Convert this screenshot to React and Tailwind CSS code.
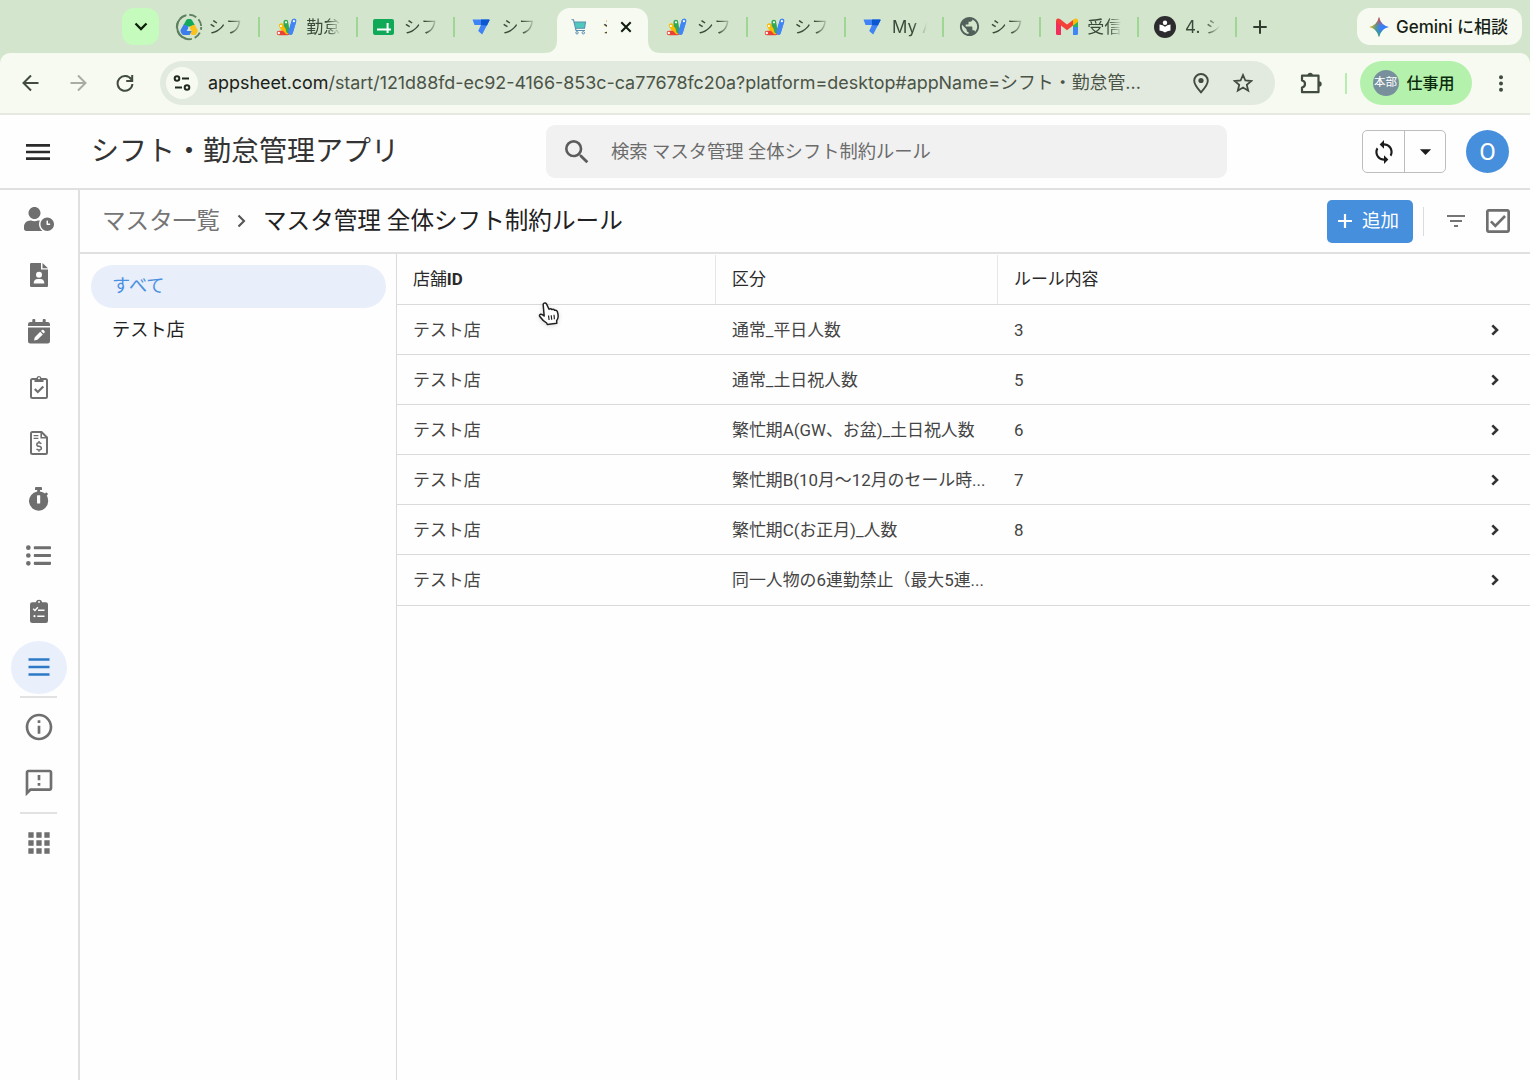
import React from "react";
import {
  MdSync, MdArrowDropDown, MdFilterList, MdOutlineCheckBox, MdSearch, MdMenu,
  MdOutlineInfo, MdOutlineFeedback, MdApps, MdPublic,
} from "react-icons/md";
import { FaUserClock, FaListUl, FaChevronRight } from "react-icons/fa";

/* ---------- browser tab icons ---------- */

const DriveLoading = () => (
  <svg width="28" height="28" viewBox="0 0 28 28" fill="none">
    <path d="M10.5 25.5A12.2 12.2 0 0 1 10.5 2.3" stroke="#5f8060" strokeWidth="1.9" />
    <circle cx="14" cy="14" r="12.2" stroke="#5f8060" strokeWidth="1.9" strokeDasharray="7.4 3" strokeDashoffset="15" pathLength="76.6" />
    <path d="M10.5 7.5q.9-1.5 2.6-1.5h2q1.700 1.500l3 5.200-4 2.400-4-6z" fill="none" />
    <path d="M11 7.4Q11.800 6 13.400 6h1.400q1.600 0 2.400 1.400l2.600 4.600-5.700 1.700-5.600-1.700z" fill="#12a95b" />
    <path d="M8.700 11.600l4.200 1.700 1.200 4.200-2.700 4.500H9q-1.500 0-2.300-1.300l-.9-1.600q-.7-1.200 0-2.500z" fill="#3b7ded" />
    <path d="M19.500 11.600l2.900 5q.7 1.300 0 2.500l-.9 1.600Q20.700 22 19.200 22h-2.600l-2.700-4.500 1.400-4.200z" fill="#fcc21b" />
    <path d="M14.100 13.700l2.500 4.200h-5z" fill="#d3e6cd" />
    <path d="M11.600 17.900h5L14.600 22h-5.200z" fill="#3b7ded" />
  </svg>
);

const AppsScript = () => (
  <svg width="21" height="18" viewBox="0 0 21 18" fill="none" strokeLinecap="round">
    <path d="M9 14L5.300 7.600" stroke="#fbbc04" strokeWidth="4.600" />
    <path d="M10.500 13L9.800 4.200" stroke="#34a853" strokeWidth="4.800" />
    <path d="M14.500 14.500L18 3" stroke="#4285f4" strokeWidth="4.600" />
    <path d="M3 15h8.500" stroke="#ea4335" strokeWidth="4.600" />
    <path d="M5 8l6 6.500" stroke="#fbbc04" strokeWidth="3.500" />
    <path d="M10 4l2 9.500" stroke="#34a853" strokeWidth="3.500" />
    <path d="M14.500 14.500L18 3" stroke="#4285f4" strokeWidth="4.600" />
    <g fill="#fff"><circle cx="2.800" cy="15" r="1.200" /><circle cx="4.900" cy="8" r="1.100" /><circle cx="10" cy="4.300" r="1.100" /><circle cx="17.900" cy="3.200" r="1.100" /></g>
  </svg>
);

const SheetPlus = () => (
  <svg width="21" height="16" viewBox="0 0 21 16">
    <rect width="21" height="16" rx="2" fill="#0fa958" />
    <path d="M4 10.500h14M14.600 4v10" stroke="#fff" strokeWidth="2" />
  </svg>
);

const AppSheet = () => (
  <svg width="18" height="16" viewBox="0 0 18 16">
    <path d="M.5.500h16.500q.8 0 .5.800L10.200 15.500 6.200 12l2.700-6H2.500z" fill="#3f83f6" />
    <path d="M9 .500h8q.8 0 .5.800L15 6.500 9 6z" fill="#0b57d0" />
  </svg>
);

const Cart = () => (
  <svg width="16" height="16" viewBox="0 0 16 16" fill="none">
    <path d="M3.300 3h11.200l-1 6.300H4.800z" fill="#4fc9be" />
    <path d="M.5.800h2l2.500 10.700h9M3.300 3h11.200l-1 6.300H4.800" stroke="#5b8fae" strokeWidth="1.100" />
    <circle cx="6" cy="13.800" r="1.200" stroke="#5b8fae" /><circle cx="12.300" cy="13.800" r="1.200" stroke="#5b8fae" />
  </svg>
);

const Gmail = () => (
  <svg width="22" height="17" viewBox="0 0 22 17">
    <path d="M0 2.500L5 6v11H1.500Q0 17 0 15.500z" fill="#f0305a" />
    <path d="M17 6l5-3.500v13q0 1.500-1.500 1.500H17z" fill="#3f87f5" />
    <path d="M17 6l5-3.500V9h-5z" fill="#2ab45b" />
    <path d="M17 7.500V2l1-.9Q19.500 0 21 .8q1 .7 1 2.200l-.2 1z" fill="#fbbc04" />
    <path d="M0 3Q0 1.500 1 .8 2.500 0 4 1.100l7 5.300 6-4.500v5.700l-6 4.600L5 7.600 0 4z" fill="#f3413a" />
  </svg>
);

const Reader = () => (
  <svg width="22" height="22" viewBox="0 0 22 22">
    <circle cx="11" cy="11" r="11" fill="#2c2c2f" />
    <circle cx="11" cy="6.800" r="2.200" fill="#fff" />
    <path d="M5.500 8.500Q9 8.800 11 10.700q2-1.900 5.500-2.200v6q-3.500.3-5.500 2-2-1.700-5.500-2z" fill="#fff" />
  </svg>
);

const Globe = () => <MdPublic size={23} className="text-[#53605a]" />;

const tabs = [
  { icon: DriveLoading, text: "シフト" },
  { icon: AppsScript, text: "勤怠管" },
  { icon: SheetPlus, text: "シフト" },
  { icon: AppSheet, text: "シフト", noRule: true },
  { active: true },
  { icon: AppsScript, text: "シフト" },
  { icon: AppsScript, text: "シフト" },
  { icon: AppSheet, text: "My App" },
  { icon: Globe, text: "シフト" },
  { icon: Gmail, text: "受信ト" },
  { icon: Reader, text: "4. シフ" },
];

function Tab({ icon: Icon, text, noRule }) {
  return (
    <div className="flex h-full w-[97.650px] shrink-0 items-center">
      <div className="ml-[12px] flex w-[28px] shrink-0 justify-center"><Icon /></div>
      <div className="ml-[6px] w-[35px] overflow-hidden whitespace-nowrap text-[17px] leading-[26px] tracking-[0.2px] text-[#3c4a3a] [mask-image:linear-gradient(to_right,#000_60%,transparent_100%)]">{text}</div>
      <div className={noRule ? "hidden" : "ml-auto h-[20px] w-[2px] bg-[#a0d694]"} />
    </div>
  );
}

function ActiveTab() {
  return (
    <div className="flex h-full w-[97.650px] shrink-0 items-end">
      <svg width="13" height="13" viewBox="0 0 13 13" className="-ml-[9px] shrink-0"><path d="M13 0v13H0Q13 13 13 0z" fill="#f7faf1" /></svg>
      <div className="flex h-[45px] w-[91px] shrink-0 items-center rounded-t-[13px] bg-[#f7faf1] pb-[8px]">
        <div className="ml-[14px]"><Cart /></div>
        <div className="ml-[15px] w-[5px] overflow-hidden whitespace-nowrap text-[17px] leading-[26px] text-[#3c4a3a]">シ</div>
        <svg width="12" height="12" viewBox="0 0 12 12" className="ml-[13px]"><path d="M1.300 1.300l9.400 9.400M10.700 1.300l-9.400 9.400" stroke="#111a10" strokeWidth="2" /></svg>
      </div>
      <svg width="13" height="13" viewBox="0 0 13 13" className="shrink-0"><path d="M0 0v13h13Q0 13 0 0z" fill="#f7faf1" /></svg>
    </div>
  );
}

function TabStrip() {
  return (
    <div className="flex h-[53px] items-center bg-[#d3e6cd]">
      <div className="ml-[122px] flex size-[37px] shrink-0 items-center justify-center rounded-[12px] bg-[#c5fcbd]">
        <svg width="14" height="9" viewBox="0 0 14 9" fill="none"><path d="M1.500 1.500L7 7l5.500-5.500" stroke="#0c1f0a" strokeWidth="2.300" /></svg>
      </div>
      <div className="ml-[3.500px] flex h-full items-center">
        {tabs.map((t, i) => (t.active ? <ActiveTab key={i} /> : <Tab key={i} {...t} />))}
      </div>
      <svg width="14" height="14" viewBox="0 0 14 14" className="ml-[16px]"><path d="M7 .3v13.400M.3 7h13.400" stroke="#303c2e" strokeWidth="2" /></svg>
      <div className="ml-auto mr-[8px] flex h-[37px] w-[165px] shrink-0 items-center rounded-[13px] bg-[#f7faf1] pl-[12px]">
        <svg width="20" height="20" viewBox="0 0 20 20">
          <defs>
            <linearGradient id="gem" x1="0" y1="0.400" x2="1" y2="0.600">
              <stop offset="0.050" stopColor="#e8b923" /><stop offset="0.350" stopColor="#5b9a8a" /><stop offset="0.550" stopColor="#3b80f5" /><stop offset="1" stopColor="#2f7bf6" />
            </linearGradient>
            <linearGradient id="gemTop" x1="0" y1="0" x2="0" y2="1">
              <stop offset="0" stopColor="#ea4335" /><stop offset="0.450" stopColor="#ea4335" stopOpacity="0" /><stop offset="0.600" stopColor="#34a853" stopOpacity="0" /><stop offset="1" stopColor="#34a853" />
            </linearGradient>
          </defs>
          <path d="M10 0Q11.800 8.200 20 10 11.800 11.800 10 20 8.200 11.800 0 10 8.200 8.200 10 0z" fill="url(#gem)" />
          <path d="M10 0Q11.800 8.200 20 10 11.800 11.800 10 20 8.200 11.800 0 10 8.200 8.200 10 0z" fill="url(#gemTop)" />
        </svg>
        <span className="ml-[7px] whitespace-nowrap text-[17px] font-medium leading-[26px] text-[#161d15]">Gemini に相談</span>
      </div>
    </div>
  );
}

function Toolbar() {
  return (
    <div className="bg-[#d3e6cd]">
      <div className="flex h-[62px] items-center rounded-t-[10px] border-b-2 border-[#e6e9df] bg-[#f7faf1]">
        <svg width="18" height="18" viewBox="0 0 18 18" fill="none" className="ml-[22px]"><path d="M16.500 9H2M9 1.500L1.500 9 9 16.500" stroke="#414b3f" strokeWidth="2" /></svg>
        <svg width="18" height="18" viewBox="0 0 18 18" fill="none" className="ml-[29px]"><path d="M1.500 9H16M9 1.500L16.500 9 9 16.500" stroke="#a8aca3" strokeWidth="2" /></svg>
        <svg width="18" height="18" viewBox="0 0 18 18" fill="none" className="ml-[29px]"><path d="M15.300 5.500A7.400 7.400 0 1 0 16.400 10M16.200 1v6h-6" stroke="#414b3f" strokeWidth="2" /></svg>
        <div className="ml-[26px] flex h-[44px] w-[1115px] shrink-0 items-center rounded-full bg-[#e2e9de]">
          <div className="ml-[6px] flex size-[32px] shrink-0 items-center justify-center rounded-full bg-[#f7faf1]">
            <svg width="18" height="16" viewBox="0 0 18 16" fill="none" stroke="#20291f" strokeWidth="2">
              <circle cx="4" cy="3.500" r="2.300" /><path d="M9 3.500h7M2 12.500h7" /><circle cx="14" cy="12.500" r="2.300" />
            </svg>
          </div>
          <div className="ml-[10px] w-[960px] whitespace-nowrap text-[17.900px] leading-[28px] text-[#4a5447]">
            <span className="text-[#1a2119]">appsheet.com</span>/start/121d88fd-ec92-4166-853c-ca77678fc20a?platform=desktop#appName=シフト・勤怠管...
          </div>
          <svg width="16" height="21" viewBox="0 0 16 21" fill="none" className="ml-[25px]"><path d="M8 19.300Q1.200 12 1.200 7.800a6.800 6.800 0 0 1 13.600 0Q14.800 12 8 19.300z" stroke="#414b3f" strokeWidth="1.900" /><circle cx="8" cy="7.500" r="2.600" fill="#414b3f" /></svg>
          <svg width="20" height="20" viewBox="0 0 20 20" fill="none" className="ml-[24px]"><path d="M10 2l2.400 5.500 6 .5-4.600 3.900 1.400 5.800L10 14.600l-5.200 3.100 1.400-5.800L1.600 8l6-.5z" stroke="#414b3f" strokeWidth="1.800" /></svg>
        </div>
        <svg width="22" height="22" viewBox="0 0 22 22" fill="none" className="ml-[25px]">
          <path d="M2 3.700h16.500v16.500H2v-4.700q3-.6 3-3.500T2 8.500z" stroke="#414b3f" strokeWidth="2.200" strokeLinejoin="round" />
          <path d="M7.500 3.500a2.700 2.700 0 0 1 5.400 0zM19 9.300a2.700 2.700 0 0 1 0 5.400z" fill="#414b3f" />
        </svg>
        <div className="ml-[22.500px] h-[21px] w-[2px] bg-[#b5eeae]" />
        <div className="ml-[13px] flex h-[44px] w-[112px] shrink-0 items-center rounded-full bg-[#b4f1ad]">
          <div className="ml-[13px] flex size-[26px] shrink-0 items-center justify-center whitespace-nowrap rounded-full bg-[#78909c] text-[11.500px] text-white">本部</div>
          <span className="ml-[8px] whitespace-nowrap text-[16px] font-medium leading-[24px] text-[#0a2a0b]">仕事用</span>
        </div>
        <svg width="4" height="17" viewBox="0 0 4 17" fill="#414b3f" className="ml-[27px]"><circle cx="2" cy="2.200" r="2" /><circle cx="2" cy="8.500" r="2" /><circle cx="2" cy="14.800" r="2" /></svg>
      </div>
    </div>
  );
}

/* ---------- app side navigation icons ---------- */

const FileUser = () => (
  <svg width="18" height="24" viewBox="0 0 18 24">
    <path d="M0 1.200Q0 0 1.200 0H11v6.500h7v16.300q0 1.200-1.200 1.200H1.200Q0 24 0 22.800z M12.500 0L18 5.300h-5.500z" fill="#6f6f6f" />
    <circle cx="9" cy="11.800" r="3" fill="#fff" /><path d="M3.700 20.500q0-4.500 4-4.500h2.600q4 0 4 4.500z" fill="#fff" />
  </svg>
);
const CalendarPen = () => (
  <svg width="22" height="25" viewBox="0 0 22 25">
    <path d="M0 7V5.300Q0 3 2.300 3h2V1Q4.300 0 5.300 0h1Q7.300 0 7.300 1v2h7.400V1q0-1 1-1h1q1 0 1 1v2h2Q22 3 22 5.300V7zM0 8.600h22v13.600Q22 24.500 19.700 24.500H2.300Q0 24.500 0 22.200z" fill="#6f6f6f" />
    <path d="M6 21.600l.8-3.400 5.400-5.400 2.600 2.600-5.400 5.400zM13 12l1-1q.7-.6 1.400 0l1.200 1.200q.6.700 0 1.400l-1 1z" fill="#fff" />
  </svg>
);
const ClipboardCheck = () => (
  <svg width="18" height="24" viewBox="0 0 18 24" fill="none">
    <rect x="1" y="4" width="16" height="19" rx="1.500" stroke="#6f6f6f" strokeWidth="2" />
    <path d="M4.500 7V3.500h2a2.500 2.500 0 0 1 5 0h2V7z" fill="#6f6f6f" /><circle cx="9" cy="3.200" r="1" fill="#fff" />
    <path d="M4.800 14l3 3 5.500-5.500" stroke="#6f6f6f" strokeWidth="2.200" />
  </svg>
);
const FileDollar = () => (
  <svg width="18" height="24" viewBox="0 0 18 24" fill="none" stroke="#6f6f6f">
    <path d="M2.500 1h9L17 6.500v15q0 1.500-1.500 1.500h-13Q1 23 1 21.500v-19Q1 1 2.500 1z" strokeWidth="2" />
    <path d="M11.200 1.500v5.300h5.300" strokeWidth="1.600" />
    <path d="M3.600 4.600h4.800M3.600 7.400h4.800" strokeWidth="1.300" />
    <path d="M11.300 12.700q-.8-1-2.300-1-2.200 0-2.200 1.700T9 15.300q2.400.3 2.400 2T9 19q-1.700 0-2.500-1.100M9 10v1.800M9 19v1.700" strokeWidth="1.500" />
  </svg>
);
const Stopwatch = () => (
  <svg width="20" height="24" viewBox="0 0 20 24">
    <path d="M6 1q0-1 1-1h5q1 0 1 1v2h-2v1.500q3 .4 5 2l1.200-1.300 1.900 1.900-1.300 1.400Q19.200 11 19.200 14.300a9.600 9.600 0 1 1-11-9.700V3H6z" fill="#6f6f6f" />
    <rect x="8" y="8.200" width="3.200" height="8.300" rx=".6" fill="#fff" />
  </svg>
);
const ClipboardList = () => (
  <svg width="18" height="24" viewBox="0 0 18 24">
    <path d="M2.200 3.200h3.600a3.300 3.300 0 0 1 6.400 0h3.600Q18 3.200 18 5.400v16.400Q18 24 15.800 24H2.200Q0 24 0 21.800V5.400q0-2.200 2.200-2.200z" fill="#6f6f6f" />
    <g fill="none" stroke="#fff"><circle cx="9" cy="3" r=".9" fill="#fff" stroke="none" /><path d="M3.200 9.800l1.700 1.700 3-3.200" strokeWidth="1.400" /><path d="M8 11.300h6.500M7.300 17.200h7.200" strokeWidth="1.600" /></g>
    <circle cx="4.500" cy="17.200" r="1.100" fill="#fff" />
  </svg>
);
const Bars = () => (
  <svg width="22" height="18" viewBox="0 0 22 18"><path d="M.5 1.500h21M.5 9h21M.5 16.500h21" stroke="#2e78c8" strokeWidth="2.600" /></svg>
);

const navIcons = [
  <FaUserClock size={30} />, <FileUser />, <CalendarPen />, <ClipboardCheck />,
  <FileDollar />, <Stopwatch />, <FaListUl size={25} />, <ClipboardList />,
];

function SideNav() {
  return (
    <nav className="flex w-[80px] shrink-0 flex-col items-center border-r-2 border-[#e0e0e0] pr-[1px] pt-[1px] text-[#6f6f6f]">
      {navIcons.map((icon, i) => <div key={i} className="flex h-[56px] w-[56px] items-center justify-center">{icon}</div>)}
      <div className="flex h-[56px] w-[56px] items-center justify-center">
        <div className="flex h-[53px] w-[56px] items-center justify-center rounded-[50%] bg-[#e9f0fb]"><Bars /></div>
      </div>
      <div className="mt-[1px] h-[2px] w-[37px] bg-[#e2e2e2]" />
      <div className="mt-[1px] flex h-[56px] items-center"><MdOutlineInfo size={32} /></div>
      <div className="flex h-[56px] items-center"><MdOutlineFeedback size={32} /></div>
      <div className="mt-[1px] h-[2px] w-[37px] bg-[#e2e2e2]" />
      <div className="mt-[1px] flex h-[56px] items-center"><MdApps size={32} /></div>
    </nav>
  );
}

const rows = [
  ["通常_平日人数", "3"],
  ["通常_土日祝人数", "5"],
  ["繁忙期A(GW、お盆)_土日祝人数", "6"],
  ["繁忙期B(10月〜12月のセール時...", "7"],
  ["繁忙期C(お正月)_人数", "8"],
  ["同一人物の6連勤禁止（最大5連...", ""],
];

function AppHeader() {
  return (
    <header className="flex h-[75px] shrink-0 items-center border-b-2 border-[#e0e0e0]">
      <MdMenu size={32} className="ml-[22px] shrink-0 text-[#2b2b2b]" />
      <h1 className="ml-[37px] w-[455px] shrink-0 whitespace-nowrap text-[28px] leading-[36px] text-[#333]">シフト・勤怠管理アプリ</h1>
      <div className="flex h-[53px] w-[681px] shrink-0 items-center rounded-[9px] bg-[#f1f1f1]">
        <MdSearch size={32} className="ml-[15px] text-[#5c5c5c]" />
        <span className="ml-[18px] whitespace-nowrap text-[18.300px] leading-[26px] text-[#6b6b6b]">検索 マスタ管理 全体シフト制約ルール</span>
      </div>
      <div className="ml-[135px] flex h-[43px] w-[84px] shrink-0 rounded-[5px] border border-[#bdbdbd]">
        <div className="flex w-[42px] items-center justify-center border-r border-[#bdbdbd]"><MdSync size={26} className="text-[#1c1c1c]" /></div>
        <div className="flex flex-1 items-center justify-center"><MdArrowDropDown size={27} className="text-[#1c1c1c]" /></div>
      </div>
      <div className="ml-[20px] flex size-[43px] shrink-0 items-center justify-center rounded-full bg-[#468fdd] text-[24px] text-white">O</div>
    </header>
  );
}

function ViewBar() {
  return (
    <div className="flex h-[64px] shrink-0 items-center border-b-2 border-[#e0e0e0] text-[23.600px] leading-[32px]">
      <span className="ml-[22px] whitespace-nowrap text-[#757575]">マスタ一覧</span>
      <svg width="9" height="14" viewBox="0 0 9 14" fill="none" className="ml-[17px]"><path d="M1.500 1.500L7 7l-5.500 5.500" stroke="#555" strokeWidth="2.100" /></svg>
      <span className="ml-[17px] whitespace-nowrap text-[#212121]">マスタ管理 全体シフト制約ルール</span>
      <div className="ml-auto flex h-[43px] w-[86px] items-center rounded-[5px] bg-[#468fdd] text-white">
        <svg width="14" height="14" viewBox="0 0 14 14" className="ml-[11px]"><path d="M7 0v14M0 7h14" stroke="#fff" strokeWidth="2.200" /></svg>
        <span className="ml-[10px] text-[18.500px] leading-[26px]">追加</span>
      </div>
      <div className="ml-[10px] h-[29px] w-px bg-[#dcdcdc]" />
      <MdFilterList size={24} className="ml-[20px] text-[#757575]" />
      <MdOutlineCheckBox size={32} className="ml-[14px] mr-[16px] text-[#6f6f6f]" />
    </div>
  );
}

function RuleTable() {
  return (
    <div className="relative min-w-0 flex-1 text-[16.900px] leading-[24px]">
      <div className="flex h-[51px] border-b border-[#dadada] pt-[1px] text-[#2a2a2a]">
        <div className="flex w-[319px] items-center border-r border-[#e6e6e6] pl-[16px] pb-[1px]">店舗<b>ID</b></div>
        <div className="flex w-[282px] items-center border-r border-[#e6e6e6] pl-[16px] pb-[1px]">区分</div>
        <div className="flex items-center pl-[16px] pb-[1px]">ルール内容</div>
      </div>
      {rows.map(([kind, value]) => (
        <div key={kind} className="flex h-[50.100px] items-center border-b border-[#dadada] text-[#444]">
          <div className="w-[319px] shrink-0 pl-[16px]">テスト店</div>
          <div className="w-[282px] shrink-0 whitespace-nowrap pl-[16px]">{kind}</div>
          <div className="flex-1 pl-[16px]">{value}</div>
          <svg width="8" height="12" viewBox="0 0 8 12" fill="none" className="mr-[31px]"><path d="M1.300 1.300L6 6l-4.700 4.700" stroke="#333" strokeWidth="2.600" /></svg>
        </div>
      ))}
      {/* mouse pointer */}
      <svg width="22" height="26" viewBox="0 0 22 26" className="absolute left-[141px] top-[47px] drop-shadow-sm">
        <path d="M5.500 2.500Q7.500 1 8.600 3.200L11 8.200q1.800-1 2.900.4 1.700-1 2.700.7 2-.6 2.700 1.300 1 3 .8 5.400-.2 2-1.500 3.800l.2 2.500-9.500 1.200-.8-1.700Q5 20 1.800 15.500q-.8-1.500.5-2.200 1.600-.6 3.900 1.700L5.300 5.200q-.3-1.800.2-2.700z" fill="#fff" stroke="#222" strokeWidth="1.500" strokeLinejoin="round" />
        <path d="M10.500 14.500l.6 4.500M13.200 14.200l.5 4.500M16 13.800l.4 4.500" stroke="#222" strokeWidth="1.200" />
      </svg>
    </div>
  );
}

export default function App() {
  return (
    <div className="flex h-[1080px] w-[1530px] flex-col overflow-hidden bg-[#fefefe] font-['Roboto','Noto_Sans_CJK_JP',sans-serif]">
      <div className="shrink-0 font-['Inter','Noto_Sans_CJK_JP',sans-serif]">
        <TabStrip />
        <Toolbar />
      </div>
      <AppHeader />
      <div className="flex min-h-0 flex-1">
        <SideNav />
        <div className="flex min-w-0 flex-1 flex-col">
          <ViewBar />
          <div className="flex min-h-0 flex-1">
            <aside className="w-[317px] shrink-0 border-r border-[#dadada] pl-[11px] pt-[11px] text-[18.200px] leading-[26px]">
              <div className="flex h-[43px] w-[295px] items-center rounded-full bg-[#e8eefa] pl-[21px] pb-[2px] text-[#4a90e2]">すべて</div>
              <div className="flex h-[43px] items-center pl-[21px] text-[#212121]">テスト店</div>
            </aside>
            <RuleTable />
          </div>
        </div>
      </div>
    </div>
  );
}
